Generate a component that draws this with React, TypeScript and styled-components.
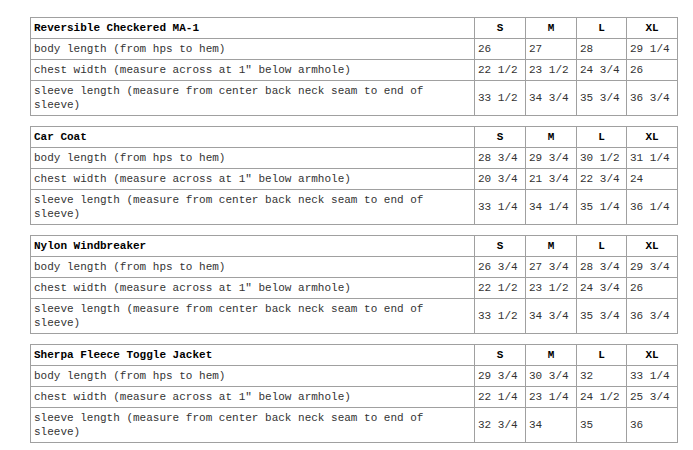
import React from 'react';
import styled, { createGlobalStyle } from 'styled-components';

const GlobalStyle = createGlobalStyle`
  body {
    margin: 0;
    background: #fff;
    font-family: "Liberation Mono", "Courier New", monospace;
  }
`;

type Garment = {
  name: string;
  rows: { label: string; values: string[] }[];
};

const sizes = ['S', 'M', 'L', 'XL'];

const BODY = 'body length (from hps to hem)';
const CHEST = 'chest width (measure across at 1" below armhole)';
const SLEEVE = 'sleeve length (measure from center back neck seam to end of sleeve)';

const garments: Garment[] = [
  {
    name: 'Reversible Checkered MA-1',
    rows: [
      { label: BODY, values: ['26', '27', '28', '29 1/4'] },
      { label: CHEST, values: ['22 1/2', '23 1/2', '24 3/4', '26'] },
      { label: SLEEVE, values: ['33 1/2', '34 3/4', '35 3/4', '36 3/4'] },
    ],
  },
  {
    name: 'Car Coat',
    rows: [
      { label: BODY, values: ['28 3/4', '29 3/4', '30 1/2', '31 1/4'] },
      { label: CHEST, values: ['20 3/4', '21 3/4', '22 3/4', '24'] },
      { label: SLEEVE, values: ['33 1/4', '34 1/4', '35 1/4', '36 1/4'] },
    ],
  },
  {
    name: 'Nylon Windbreaker',
    rows: [
      { label: BODY, values: ['26 3/4', '27 3/4', '28 3/4', '29 3/4'] },
      { label: CHEST, values: ['22 1/2', '23 1/2', '24 3/4', '26'] },
      { label: SLEEVE, values: ['33 1/2', '34 3/4', '35 3/4', '36 3/4'] },
    ],
  },
  {
    name: 'Sherpa Fleece Toggle Jacket',
    rows: [
      { label: BODY, values: ['29 3/4', '30 3/4', '32', '33 1/4'] },
      { label: CHEST, values: ['22 1/4', '23 1/4', '24 1/2', '25 3/4'] },
      { label: SLEEVE, values: ['32 3/4', '34', '35', '36'] },
    ],
  },
];

const Page = styled.div`
  display: flex;
  flex-direction: column;
  gap: 10px;
  padding: 17px 0 0 30px;
`;

const Table = styled.table`
  width: 647px;
  border-collapse: collapse;
  table-layout: fixed;
  font-size: 11px;
  line-height: 14px;
  color: #333;
`;

const Cell = styled.td`
  border: 1px solid #a0a0a0;
  padding: 3px 3px;
  vertical-align: middle;
`;

const TitleCell = styled(Cell)`
  width: 437px;
  font-weight: bold;
  color: #000;
`;

const SizeCell = styled(Cell)<{ $w: number }>`
  width: ${(p) => p.$w}px;
  font-weight: bold;
  color: #000;
  text-align: center;
`;

const LabelCell = styled(Cell)``;

const ValueCell = styled(Cell)`
  white-space: nowrap;
`;

const widths = [44, 44, 43, 44];

const SizeTable = ({ garment }: { garment: Garment }) => (
  <Table>
    <tbody>
      <tr>
        <TitleCell>{garment.name}</TitleCell>
        {sizes.map((s, i) => (
          <SizeCell key={s} $w={widths[i]}>
            {s}
          </SizeCell>
        ))}
      </tr>
      {garment.rows.map((row) => (
        <tr key={row.label}>
          <LabelCell>{row.label}</LabelCell>
          {row.values.map((v, i) => (
            <ValueCell key={i}>{v}</ValueCell>
          ))}
        </tr>
      ))}
    </tbody>
  </Table>
);

export default function App() {
  return (
    <>
      <GlobalStyle />
      <Page>
        {garments.map((g) => (
          <SizeTable key={g.name} garment={g} />
        ))}
      </Page>
    </>
  );
}
